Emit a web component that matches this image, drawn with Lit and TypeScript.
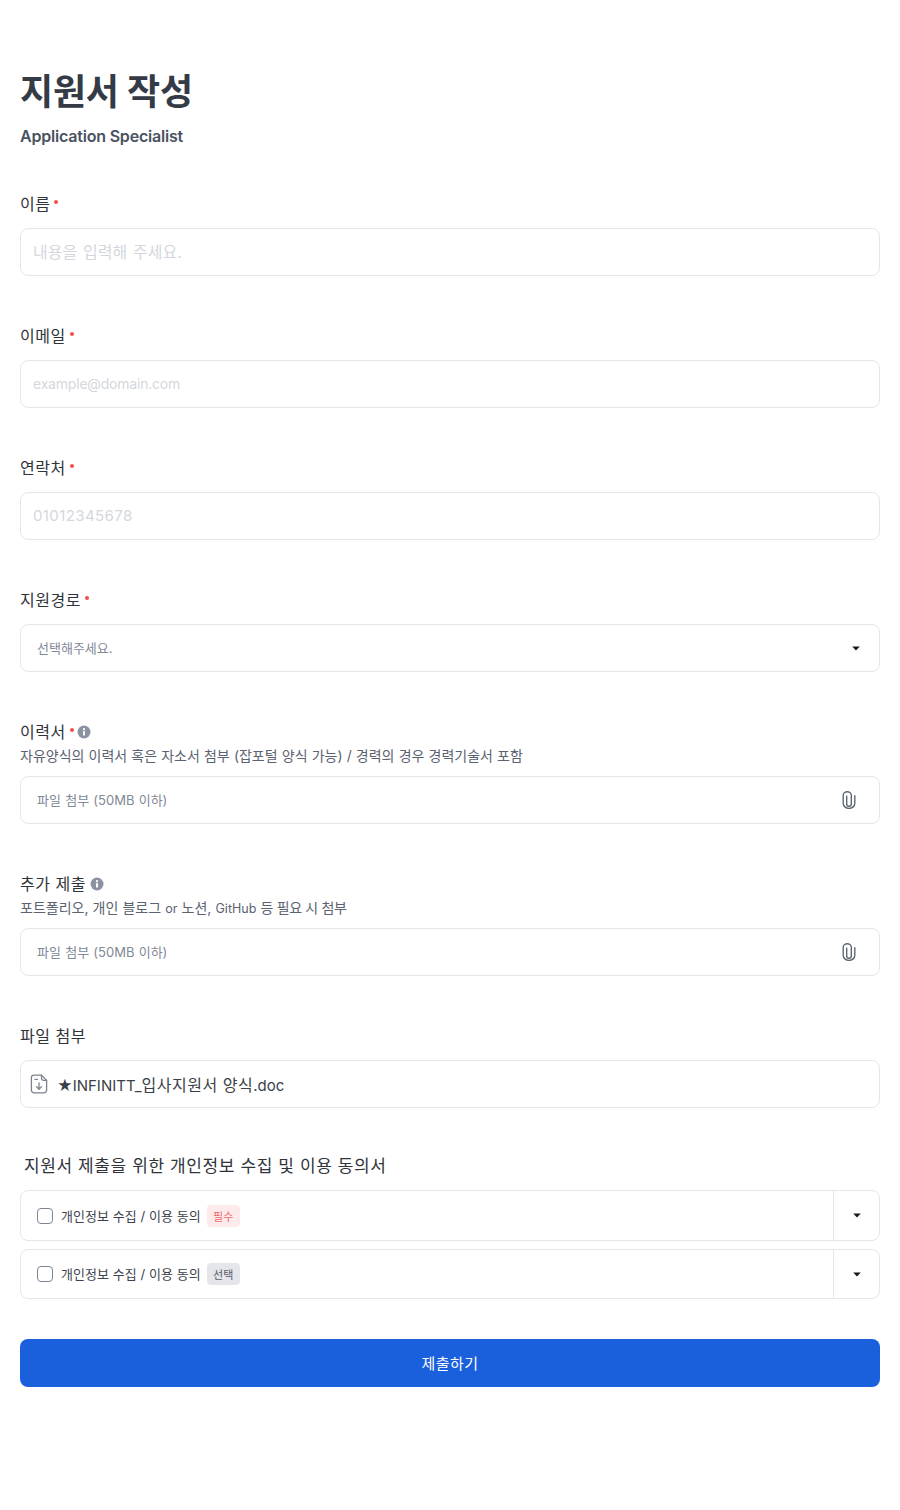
import { LitElement, html, css } from "lit";
import { customElement } from "lit/decorators.js";

const caret = html`<svg class="caret" width="8" height="5" viewBox="0 0 10 6"><path d="M0.3 0.5H9.7L5 5.6Z" fill="#16191f"/></svg>`;
const info = html`<svg class="info" width="14" height="14" viewBox="0 0 14 14"><circle cx="7" cy="7" r="6.5" fill="#8b93a3"/><rect x="6" y="6" width="2" height="4.6" rx=".4" fill="#fff"/><circle cx="7" cy="4.2" r="1.1" fill="#fff"/></svg>`;
const clip = html`<svg class="clip" width="14" height="18" viewBox="0 0 14 18" fill="none" stroke="#5f6775" stroke-width="1.4" stroke-linecap="round"><path d="M4.7 5.2V13a2.3 2.3 0 0 0 4.6 0V4.2A4.05 3.4 0 0 0 1.2 4.2v8a5.8 5.2 0 0 0 11.6 0V4.8"/></svg>`;
const fileIcon = html`<svg width="18" height="20" viewBox="0 0 18 20" fill="none" stroke="#7b8391" stroke-width="1.3" stroke-linecap="round" stroke-linejoin="round"><path d="M11.5 1.2H4a2.6 2.6 0 0 0-2.6 2.6v12.4A2.6 2.6 0 0 0 4 18.8h10a2.6 2.6 0 0 0 2.6-2.6V6.4z"/><path d="M11.5 1.2v3.4a1.8 1.8 0 0 0 1.8 1.8h3.3"/><path d="M5 5.4h2.4"/><path d="M9 9v6M6.4 12.6 9 15.2l2.6-2.6"/></svg>`;

@customElement("app-root")
export class AppRoot extends LitElement {
  static styles = css`
    :host {
      display: block;
      width: 900px;
      min-height: 1510px;
      background: #fff;
      box-sizing: border-box;
      padding: 66px 20px 0;
      font-family: Inter, "Noto Sans CJK KR", sans-serif;
      color: #2b2f36;
    }
    h1 {
      margin: 0;
      font-size: 36px;
      line-height: 52px;
      font-weight: 700;
      color: #343a46;
      letter-spacing: -0.2px;
    }
    .sub {
      margin: 6px 0 0;
      font-size: 16px;
      line-height: 24px;
      font-weight: 600;
      color: #4a5261;
      letter-spacing: -0.2px;
    }
    .fields { display: flex; flex-direction: column; gap: 48px; margin-top: 44px; }
    .label {
      display: flex;
      align-items: center;
      font-size: 16px;
      line-height: 24px;
      font-weight: 400;
      letter-spacing: 0.5px;
      color: #2f333a;
      height: 24px;
      white-space: pre;
    }
    .req { width: 4px; height: 4px; border-radius: 50%; background: #f04f4f; margin: 0 0 4px 4px; }
    .info { margin-left: 4px; }
    .req + .info { margin-left: 3px; }
    .help { font-size: 14px; line-height: 24px; color: #5b6270; height: 24px; margin: 0 0 8px; word-spacing: 0.2px; }
    .lat { font-size: 12.5px; }
    .tail { letter-spacing: -0.4px; }
    .box {
      box-sizing: border-box;
      height: 48px;
      margin-top: 12px;
      border: 1px solid #e4e6eb;
      border-radius: 8px;
      display: flex;
      align-items: center;
      background: #fff;
    }
    .help + .box { margin-top: 0; }
    .ph { padding-left: 12px; margin-bottom: 2px; font-size: 16px; color: #d4d7dd; word-spacing: 1.4px; }
    .ph.mail { font-size: 14px; letter-spacing: -0.2px; }
    .ph.num { font-size: 15px; letter-spacing: 0.4px; }
    .sel { padding: 0 19px 0 16px; justify-content: space-between; font-size: 13px; color: #828997; }
    .sel .t { word-spacing: 0.6px; margin-bottom: 2px; }
    .clip { margin-right: 4px; }
    .file { padding-left: 9px; font-size: 15px; color: #3a3f48; gap: 9px; }
    .ko { font-size: 16px; letter-spacing: 0.5px; }
    .consent-title {
      margin: 46px 0 0 4px;
      font-size: 17px;
      line-height: 24px;
      font-weight: 400;
      letter-spacing: 0.6px;
      color: #2f333a;
    }
    .rows { display: flex; flex-direction: column; gap: 8px; margin-top: 12px; }
    .row {
      box-sizing: border-box;
      border: 1px solid #e4e6eb;
      border-radius: 8px;
      display: flex;
      align-items: center;
    }
    .row.a { height: 51px; }
    .row.b { height: 50px; }
    .row.b .rt { margin-bottom: 2px; }
    .cb {
      box-sizing: border-box;
      width: 16px;
      height: 16px;
      border: 1px solid #7e8696;
      border-radius: 4px;
      margin-left: 16px;
    }
    .rt { margin-left: 8px; font-size: 13px; color: #3d424c; word-spacing: 0.2px; }
    .tag {
      margin-left: 6px;
      box-sizing: border-box;
      width: 33px;
      height: 22px;
      border-radius: 4px;
      font-size: 11px;
      display: flex;
      align-items: center;
      justify-content: center;
    }
    .tag.r { background: #fdeaea; color: #ee6a6a; }
    .tag.g { background: #e4e6eb; color: #565d6a; }
    .tog {
      margin-left: auto;
      align-self: stretch;
      box-sizing: border-box;
      width: 46px;
      border-left: 1px solid #e4e6eb;
      display: flex;
      align-items: center;
      justify-content: center;
    }
    .submit {
      display: block;
      width: 100%;
      height: 48px;
      margin-top: 40px;
      padding: 0 0 2px;
      border: 0;
      border-radius: 8px;
      background: #1a5fdc;
      color: #fff;
      font-family: inherit;
      font-size: 15px;
      letter-spacing: 0.4px;
    }
  `;

  private field(name: string, req: boolean, body: unknown, withInfo = false, help: unknown = "") {
    return html`<div>
      <div class="label">${name}${req ? html`<span class="req"></span>` : ""}${withInfo ? info : ""}</div>
      ${help}
      ${body}
    </div>`;
  }

  render() {
    const attach = html`<div class="box sel"><span class="t">파일 첨부 (50MB 이하)</span>${clip}</div>`;
    return html`
      <h1>지원서 작성</h1>
      <p class="sub">Application Specialist</p>
      <div class="fields">
        ${this.field("이름", true, html`<div class="box"><span class="ph">내용을 입력해 주세요.</span></div>`)}
        ${this.field("이메일", true, html`<div class="box"><span class="ph mail">example@domain.com</span></div>`)}
        ${this.field("연락처", true, html`<div class="box"><span class="ph num">01012345678</span></div>`)}
        ${this.field("지원경로", true, html`<div class="box sel"><span class="t">선택해주세요.</span>${caret}</div>`)}
        ${this.field("이력서", true, attach, true, html`<div class="help">자유양식의 이력서 혹은 자소서 첨부 (잡포털 양식 가능) / 경력의 경우 경력기술서 포함</div>`)}
        ${this.field("추가 제출", false, attach, true, html`<div class="help">포트폴리오, 개인 블로그 <span class="lat">or</span> 노션, <span class="lat">GitHub</span> <span class="tail">등 필요 시 첨부</span></div>`)}
        ${this.field("파일 첨부", false, html`<div class="box file">${fileIcon}<span>★INFINITT_<span class="ko">입사지원서 양식</span>.doc</span></div>`)}
      </div>
      <div class="consent-title">지원서 제출을 위한 개인정보 수집 및 이용 동의서</div>
      <div class="rows">
        <div class="row a"><span class="cb"></span><span class="rt">개인정보 수집 / 이용 동의</span><span class="tag r">필수</span><span class="tog">${caret}</span></div>
        <div class="row b"><span class="cb"></span><span class="rt">개인정보 수집 / 이용 동의</span><span class="tag g">선택</span><span class="tog">${caret}</span></div>
      </div>
      <button class="submit">제출하기</button>
    `;
  }
}
